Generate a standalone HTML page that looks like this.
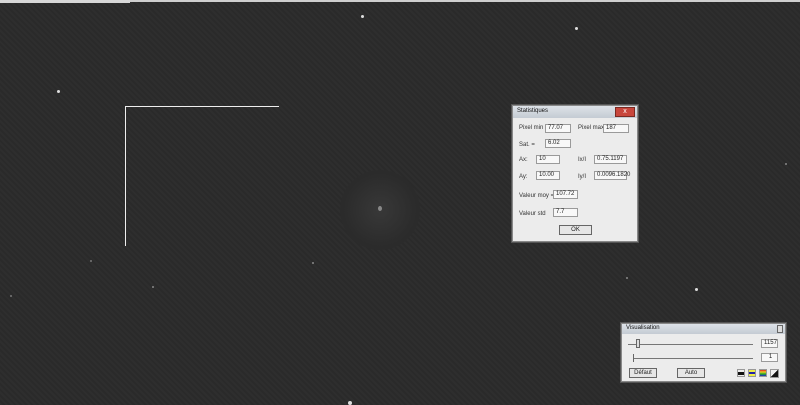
<!DOCTYPE html>
<html><head><meta charset="utf-8"><style>
*{margin:0;padding:0;box-sizing:border-box}
body{width:800px;height:405px;background:#2b2b2b;position:relative;overflow:hidden;font-family:"Liberation Sans",sans-serif;font-size:7px;color:#222;background-image:repeating-linear-gradient(45deg,rgba(255,255,255,0.015) 0 2px,rgba(0,0,0,0.02) 2px 4px)}
.top{position:absolute;left:0;top:0;width:800px;height:2px;background:#cfcfcf}
.tb{position:absolute;top:0;height:4px;background:#d8d8d8}
.s{position:absolute;border-radius:50%;background:#ddd}
.win{position:absolute;background:#ececec;border:1px solid #888;box-shadow:0 0 0 1px #555}
.title{position:absolute;left:0;top:0;right:0;height:12px;background:linear-gradient(#dde2e8,#c4cbd3);font-size:6px;padding:2px 4px;color:#111}
.f{position:absolute;height:9px;border:1px solid #9a9a9a;background:#f8f8f8;font-size:6px;padding-left:2px;line-height:7px}
.l{position:absolute;font-size:6px;color:#333}
.btn{position:absolute;border:1px solid #666;background:#e6e6e6;height:10px;font-size:6px;text-align:center;line-height:8px}
.line{position:absolute;background:#eee}
</style></head><body>
<div class="top"></div>
<div class="tb" style="left:0;width:130px;height:3px"></div>
<div class="line" style="left:125px;top:106px;width:154px;height:1px"></div>
<div class="line" style="left:125px;top:106px;width:1px;height:140px"></div>
<div style="position:absolute;left:340px;top:170px;width:80px;height:80px;border-radius:50%;background:radial-gradient(#383838,#2b2b2b 65%)"></div>
<div class="s" style="left:378px;top:206px;width:4px;height:5px;background:#888"></div>
<div class="s" style="left:57px;top:90px;width:3px;height:3px"></div>
<div class="s" style="left:361px;top:15px;width:3px;height:3px"></div>
<div class="s" style="left:575px;top:27px;width:3px;height:3px"></div>
<div class="s" style="left:695px;top:288px;width:3px;height:3px"></div>
<div class="s" style="left:348px;top:401px;width:4px;height:4px"></div>
<div class="s" style="left:626px;top:277px;width:2px;height:2px;background:#888"></div>
<div class="s" style="left:312px;top:262px;width:2px;height:2px;background:#888"></div>
<div class="s" style="left:152px;top:286px;width:2px;height:2px;background:#888"></div>
<div class="s" style="left:90px;top:260px;width:2px;height:2px;background:#777"></div>
<div class="s" style="left:10px;top:295px;width:2px;height:2px;background:#777"></div>
<div class="s" style="left:785px;top:163px;width:2px;height:2px;background:#888"></div>

<div class="win" style="left:512px;top:105px;width:126px;height:137px">
 <div class="title">Statistiques</div>
 <div style="position:absolute;right:2px;top:1px;width:20px;height:10px;background:#c8463c;border:1px solid #7a2a22;color:#fff;font-size:7px;text-align:center;line-height:8px">x</div>
 <div class="l" style="left:6px;top:19px">Pixel min</div><div class="f" style="left:32px;top:18px;width:26px">77.07</div>
 <div class="l" style="left:65px;top:19px">Pixel max</div><div class="f" style="left:90px;top:18px;width:26px">187</div>
 <div class="l" style="left:6px;top:36px">Sat. =</div><div class="f" style="left:32px;top:33px;width:26px">6.02</div>
 <div class="l" style="left:6px;top:51px">Ax:</div><div class="f" style="left:23px;top:49px;width:24px">10</div>
 <div class="l" style="left:65px;top:51px">Ix/I</div><div class="f" style="left:81px;top:49px;width:33px">0.75.1197</div>
 <div class="l" style="left:6px;top:68px">Ay:</div><div class="f" style="left:23px;top:65px;width:24px">10.00</div>
 <div class="l" style="left:65px;top:68px">Iy/I</div><div class="f" style="left:81px;top:65px;width:33px">0.0096.1820</div>
 <div class="l" style="left:6px;top:87px">Valeur moy =</div><div class="f" style="left:40px;top:84px;width:25px">107.72</div>
 <div class="l" style="left:6px;top:105px">Valeur std</div><div class="f" style="left:40px;top:102px;width:25px">7.7</div>
 <div class="btn" style="left:46px;top:119px;width:33px">OK</div>
</div>

<div class="win" style="left:621px;top:323px;width:165px;height:59px">
 <div class="title" style="height:10px;padding-top:1px">Visualisation</div>
 <div style="position:absolute;right:2px;top:1px;width:6px;height:8px;border:1px solid #666;background:#ddd"></div>
 <div class="line" style="left:6px;top:20px;width:125px;height:1px;background:#777"></div>
 <div style="position:absolute;left:14px;top:15px;width:4px;height:9px;background:#ddd;border:1px solid #666"></div>
 <div class="f" style="left:139px;top:15px;width:17px">1157</div>
 <div class="line" style="left:11px;top:34px;width:120px;height:1px;background:#777"></div>
 <div class="line" style="left:11px;top:30px;width:1px;height:8px;background:#666"></div>
 <div class="f" style="left:139px;top:29px;width:17px;text-align:center">1</div>
 <div class="btn" style="left:7px;top:44px;width:28px">Défaut</div>
 <div class="btn" style="left:55px;top:44px;width:28px">Auto</div>
 <div style="position:absolute;left:115px;top:45px;width:8px;height:8px;background:#eee;border:1px solid #999"><div style="margin-top:2px;height:3px;background:#111"></div></div>
 <div style="position:absolute;left:126px;top:45px;width:8px;height:8px;background:linear-gradient(#ee4 0,#ee4 30%,#22a 30%,#22a 70%,#ee4 70%);border:1px solid #999"></div>
 <div style="position:absolute;left:137px;top:45px;width:8px;height:8px;background:linear-gradient(#d22,#ec2,#2a2,#22c);border:1px solid #999"></div>
 <div style="position:absolute;left:148px;top:45px;width:9px;height:9px;background:linear-gradient(135deg,#eee 50%,#111 50%);border:1px solid #999"></div>
</div>
</body></html>
